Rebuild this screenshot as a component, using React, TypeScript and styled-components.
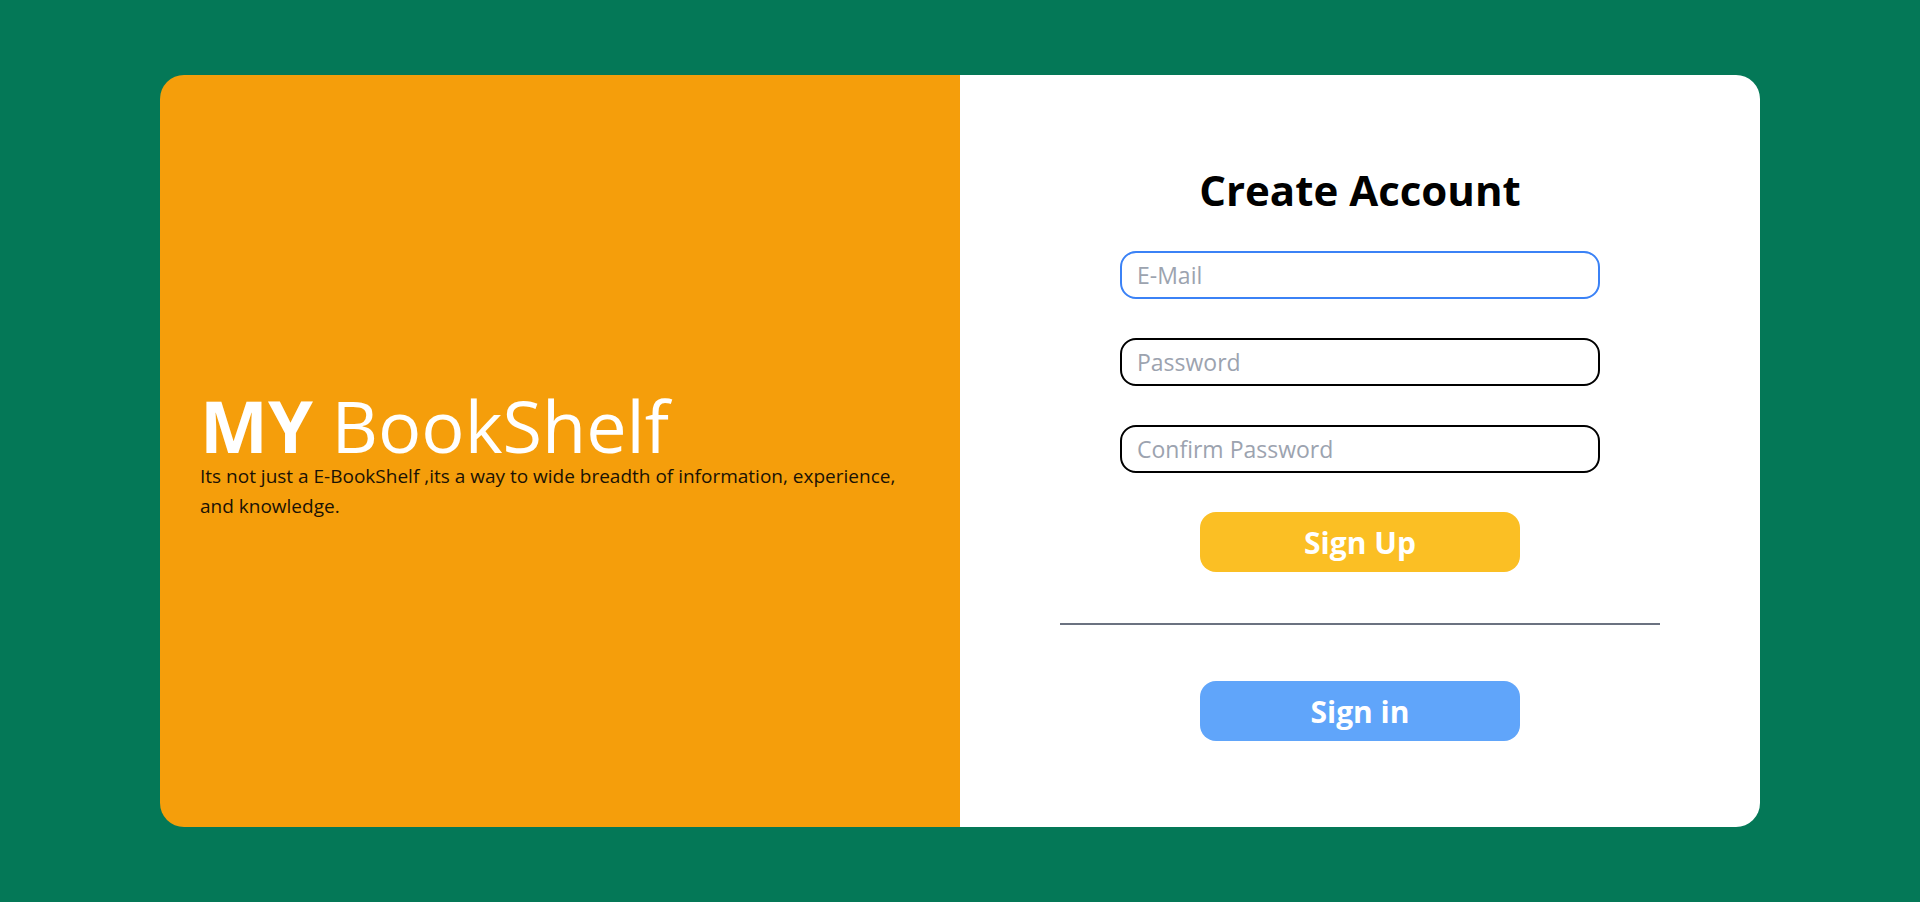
import React from "react";
import styled, { createGlobalStyle } from "styled-components";

const GlobalStyle = createGlobalStyle`
  html, body {
    margin: 0;
    padding: 0;
    background: #047857;
  }
  * { box-sizing: border-box; }
`;

const Page = styled.main`
  height: 902px;
  display: flex;
  align-items: center;
  justify-content: center;
  font-family: "Open Sans", "Noto Sans", sans-serif;
`;

const Card = styled.section`
  width: 1600px;
  height: 752px;
  border-radius: 24px;
  overflow: hidden;
  display: grid;
  grid-template-columns: 1fr 1fr;
`;

const Brand = styled.div`
  background: #f59e0b;
  display: flex;
  flex-direction: column;
  justify-content: center;
  padding: 8px 40px 0 40px;
`;

const BrandTitle = styled.h1`
  margin: 0;
  font-size: 72px;
  line-height: 72px;
  font-weight: 400;
  color: #ffffff;
`;

const Strong = styled.span`
  font-weight: 700;
`;

const Tagline = styled.p`
  margin: 0;
  font-size: 19px;
  line-height: 30px;
  color: #1a1205;
`;

const FormSide = styled.div`
  background: #ffffff;
  display: flex;
  flex-direction: column;
  align-items: center;
  padding-top: 91px;
`;

const Title = styled.h2`
  margin: 0;
  font-size: 42px;
  line-height: 48px;
  font-weight: 700;
  color: #000000;
`;

const Form = styled.form`
  margin-top: 37px;
  display: flex;
  flex-direction: column;
  align-items: center;
  gap: 39px;
`;

const Field = styled.input<{ $active?: boolean }>`
  width: 480px;
  height: 48px;
  border: 2px solid ${(p) => (p.$active ? "#3b82f6" : "#000000")};
  border-radius: 16px;
  padding: 0 15px;
  font-family: "Open Sans", "Noto Sans", sans-serif;
  font-size: 23px;
  color: #111827;
  caret-color: #000000;
  background: #ffffff;
  outline: none;
  &::placeholder {
    color: #9ca3af;
  }
`;

const Button = styled.button<{ $tone: "yellow" | "blue" }>`
  width: 320px;
  height: 60px;
  border: none;
  border-radius: 16px;
  background: ${(p) => (p.$tone === "yellow" ? "#fbbf24" : "#60a5fa")};
  color: #ffffff;
  font-family: "Open Sans", "Noto Sans", sans-serif;
  font-size: 30px;
  font-weight: 700;
  cursor: pointer;
`;

const Divider = styled.hr`
  margin: 51px 0 0 0;
  width: 600px;
  height: 2px;
  border: none;
  background: #6b7280;
`;

const SignInButton = styled(Button)`
  margin-top: 56px;
`;

export default function App() {
  return (
    <>
      <GlobalStyle />
      <Page>
        <Card>
          <Brand>
            <BrandTitle>
              <Strong>MY</Strong> BookShelf
            </BrandTitle>
            <Tagline>
              Its not just a E-BookShelf ,its a way to wide breadth of information, experience,
              and knowledge.
            </Tagline>
          </Brand>
          <FormSide>
            <Title>Create Account</Title>
            <Form onSubmit={(e) => e.preventDefault()}>
              <Field type="email" placeholder="E-Mail" $active autoFocus />
              <Field type="password" placeholder="Password" />
              <Field type="password" placeholder="Confirm Password" />
              <Button type="submit" $tone="yellow">Sign Up</Button>
            </Form>
            <Divider />
            <SignInButton type="button" $tone="blue">Sign in</SignInButton>
          </FormSide>
        </Card>
      </Page>
    </>
  );
}
